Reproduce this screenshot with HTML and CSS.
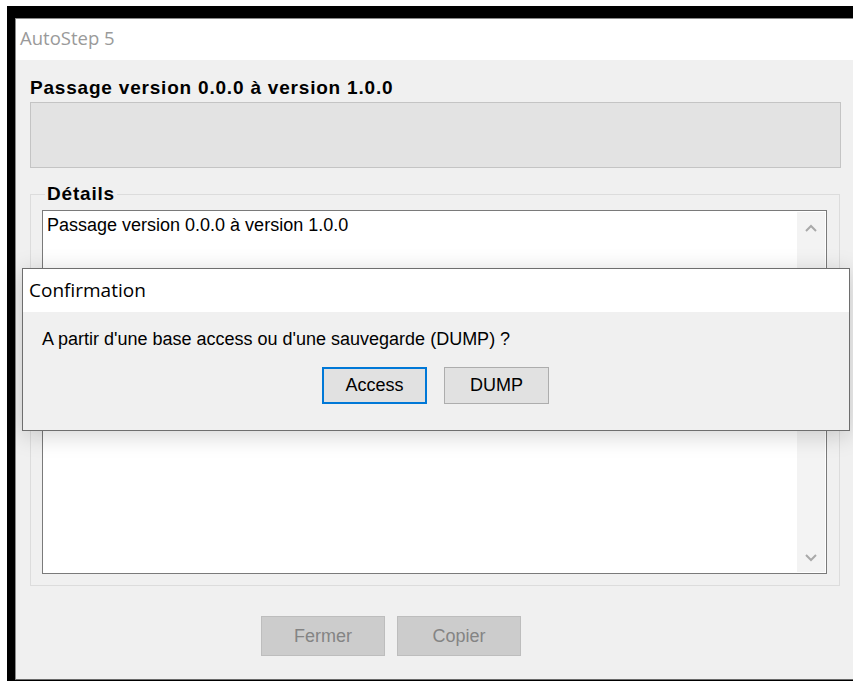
FILE: index.html
```html
<!DOCTYPE html>
<html lang="fr">
<head>
<meta charset="utf-8">
<title>AutoStep 5</title>
<link rel="stylesheet" href="styles.css">
</head>
<body>
<div class="screen">
  <div class="window">
    <div class="titlebar">AutoStep 5</div>
    <div class="content">
      <div class="heading">Passage version 0.0.0 à version 1.0.0</div>
      <div class="status-box"></div>
      <fieldset class="group">
        <legend>Détails</legend>
        <div class="textbox">
          <div class="textbox-text">Passage version 0.0.0 à version 1.0.0</div>
          <div class="scrollbar">
            <svg class="chev" width="14" height="10" viewBox="0 0 14 10"><path d="M2 8 L7 3 L12 8" fill="none" stroke="#a9a9a9" stroke-width="2"/></svg>
            <svg class="chev" width="14" height="10" viewBox="0 0 14 10"><path d="M2 2 L7 7 L12 2" fill="none" stroke="#a9a9a9" stroke-width="2"/></svg>
          </div>
        </div>
      </fieldset>
      <div class="actions">
        <button class="btn disabled">Fermer</button>
        <button class="btn disabled">Copier</button>
      </div>
    </div>
  </div>

  <div class="dialog">
    <div class="dialog-title">Confirmation</div>
    <div class="dialog-body">
      <div class="dialog-msg">A partir d'une base access ou d'une sauvegarde (DUMP) ?</div>
      <div class="dialog-actions">
        <button class="dbtn focused">Access</button>
        <button class="dbtn">DUMP</button>
      </div>
    </div>
  </div>
</div>
</body>
</html>
```

FILE: styles.css
```css
html, body {
  margin: 0;
  padding: 0;
  background: #ffffff;
}

.screen {
  position: relative;
  width: 853px;
  height: 682px;
  overflow: hidden;
  padding: 6px 0 0 7px;
  box-sizing: border-box;
}

/* main window, with its dark frame */
.window {
  box-sizing: border-box;
  width: 860px;
  height: 675px;
  background: #000;
  padding: 12px 0 1px 8px;
  display: flex;
  flex-direction: column;
}

.titlebar {
  border-top: 1px solid #8a8a8a;
  border-left: 1px solid #8a8a8a;
  background: #fff;
  height: 42px;
  box-sizing: border-box;
  padding: 6px 0 0 4px;
  font-family: "Open Sans", "Noto Sans", sans-serif;
  font-size: 18.5px;
  line-height: 25px;
  color: #9a9a9a;
}

.content {
  flex: 1;
  background: #f0f0f0;
  border-left: 1px solid #8a8a8a;
  border-bottom: 1px solid #6a6a6a;
  padding: 14px 0 0 14px;
  font-family: "Liberation Sans", Arial, sans-serif;
  display: flex;
  flex-direction: column;
}

.heading {
  font-weight: bold;
  font-size: 19px;
  letter-spacing: 0.8px;
  color: #000;
  height: 28px;
  line-height: 28px;
}

.status-box {
  width: 811px;
  height: 66px;
  box-sizing: border-box;
  background: #e3e3e3;
  border: 1px solid #c4c4c4;
}

.group {
  margin: 16px 0 0 0;
  width: 810px;
  box-sizing: border-box;
  border: 1px solid #dcdcdc;
  padding: 0 11px 11px 11px;
}

.group legend {
  font-weight: bold;
  font-size: 19px;
  letter-spacing: 0.8px;
  padding: 0 2px;
  margin-left: 3px;
  line-height: 20px;
  color: #000;
}

.textbox {
  margin-top: 6px;
  width: 785px;
  height: 364px;
  box-sizing: border-box;
  background: #fff;
  border: 1px solid #7a7a7a;
  display: flex;
}

.textbox-text {
  flex: 1;
  font-size: 18px;
  padding: 4px 0 0 4px;
  line-height: 20px;
  color: #000;
}

.scrollbar {
  width: 28px;
  margin: 1px 1px 1px 0;
  background: #f3f3f3;
  display: flex;
  flex-direction: column;
  justify-content: space-between;
  align-items: center;
  padding: 11px 0 9px;
}

.chev {
  display: block;
}

.actions {
  display: flex;
  gap: 12px;
  margin: 30px 0 0 231px;
}

.btn {
  width: 124px;
  height: 40px;
  box-sizing: border-box;
  font-family: "Liberation Sans", Arial, sans-serif;
  font-size: 18px;
  border: 1px solid #bdbdbd;
  background: #cccccc;
  color: #848484;
  padding: 0;
}

/* modal confirmation box over the main window */
.dialog {
  position: absolute;
  left: 22px;
  top: 268px;
  width: 828px;
  height: 163px;
  box-sizing: border-box;
  border: 1px solid #6e6e6e;
  background: #f0f0f0;
  box-shadow: 0 4px 22px rgba(0, 0, 0, 0.18);
  display: flex;
  flex-direction: column;
}

.dialog-title {
  height: 43px;
  box-sizing: border-box;
  background: #fff;
  padding: 8px 0 0 6px;
  font-family: "Open Sans", "Noto Sans", sans-serif;
  font-size: 19px;
  line-height: 26px;
  color: #000;
}

.dialog-body {
  flex: 1;
  padding: 17px 0 0 19px;
  font-family: "Liberation Sans", Arial, sans-serif;
}

.dialog-msg {
  font-size: 18px;
  line-height: 20px;
  color: #000;
}

.dialog-actions {
  display: flex;
  gap: 17px;
  margin: 18px 0 0 280px;
}

.dbtn {
  width: 105px;
  height: 37px;
  box-sizing: border-box;
  font-family: "Liberation Sans", Arial, sans-serif;
  font-size: 18px;
  background: #e1e1e1;
  border: 1px solid #adadad;
  color: #000;
  padding: 0;
}

.dbtn.focused {
  border: 2px solid #0078d7;
}
```
